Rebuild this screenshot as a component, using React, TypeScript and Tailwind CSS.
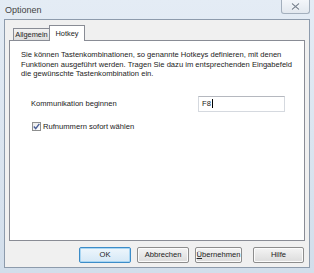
import React from 'react'

const font = { fontFamily: '"Liberation Sans", Arial, sans-serif' }

const Btn: React.FC<{ children: React.ReactNode; primary?: boolean; className?: string }> = ({
  children,
  primary,
  className,
}) => (
  <div
    className={
      'h-[16px] flex items-center justify-center rounded-[2px] border text-[7.6px] text-[#222] ' +
      (primary
        ? 'border-[#3c8cc8] bg-gradient-to-b from-[#eef6fc] to-[#d5e8f6] shadow-[inset_0_0_0_1px_#a9d6f3] '
        : 'border-[#8d8d8d] bg-gradient-to-b from-[#f4f4f4] to-[#dcdcdc] shadow-[inset_0_0_0_1px_#fbfbfb] ') +
      (className ?? '')
    }
  >
    {children}
  </div>
)

export default function App() {
  return (
    <div
      className="w-[314px] h-[273px] overflow-hidden flex flex-col px-[4px] pb-[5px] bg-gradient-to-b from-[#e4ecf5] to-[#d2deeb]"
      style={font}
    >
      {/* title bar */}
      <div className="h-[19px] flex justify-between">
        <span className="mt-[5px] pl-[1px] text-[9px] leading-[10px] text-[#444]">Optionen</span>
        <div className="w-[29px] h-[14px] flex items-center justify-center rounded-b-[3px] border border-t-0 border-[#a3afbd] bg-gradient-to-b from-[#f3f6fa] to-[#e2e8ef]">
          <svg width="9" height="7" viewBox="0 0 9 7">
            <path d="M1 0.5 L8 6.5 M8 0.5 L1 6.5" stroke="#fafbfc" strokeWidth="2.6" />
            <path d="M1 0.5 L8 6.5 M8 0.5 L1 6.5" stroke="#7d8794" strokeWidth="1.1" />
          </svg>
        </div>
      </div>

      {/* client area */}
      <div className="flex-1 flex flex-col bg-[#f0f0f0] border border-[#8d9bac] pl-[4px] pr-[4px] pt-[5px]">
        {/* tabs */}
        <div className="h-[15px] flex items-end pl-[4px] text-[7.4px] text-[#222]">
          <div className="h-[12px] w-[37px] flex items-center justify-center border border-b-0 border-[#898c95] bg-gradient-to-b from-[#f2f2f2] to-[#dedede]">
            Allgemein
          </div>
          <div className="relative z-10 -mb-px h-[16px] w-[36px] -ml-px flex items-start pt-[2px] justify-center border border-b-0 border-[#898c95] bg-white">
            Hotkey
          </div>
        </div>

        {/* panel */}
        <div className="h-[201px] bg-white border border-[#898c95] flex flex-col pl-[11px] pt-[9px] text-[7.6px] text-[#222]">
          <p className="leading-[9.5px] whitespace-nowrap">
            Sie können Tastenkombinationen, so genannte Hotkeys definieren, mit denen
            <br />
            Funktionen ausgeführt werden. Tragen Sie dazu im entsprechenden Eingabefeld
            <br />
            die gewünschte Tastenkombination ein.
          </p>

          <div className="mt-[17px] flex items-center justify-between pl-[10px] pr-[19px]">
            <span>Kommunikation beginnen</span>
            <div className="w-[87px] h-[16px] flex items-center pl-[3px] border border-[#d5d9df] border-t-[#b5b8bf] bg-white">
              <span>F8</span>
              <span className="w-px h-[9px] bg-black ml-px" />
            </div>
          </div>

          <div className="mt-[9px] flex items-center pl-[11px]">
            <div className="w-[9px] h-[9px] border border-[#8e8f8f] bg-gradient-to-br from-[#eaeaea] to-white flex items-center justify-center">
              <svg width="7" height="7" viewBox="0 0 7 7">
                <path d="M0.8 3.6 L2.7 5.6 L6.3 0.8" stroke="#4a5f97" strokeWidth="1.4" fill="none" />
              </svg>
            </div>
            <span className="ml-[2px]">Rufnummern sofort wählen</span>
          </div>
        </div>

        {/* buttons */}
        <div className="mt-[6px] flex justify-end pr-[1px]">
          <Btn primary className="w-[52px]">
            OK
          </Btn>
          <Btn className="w-[52px] ml-[6px]">Abbrechen</Btn>
          <Btn className="w-[47px] ml-[6px]">
            <span>
              <span className="underline underline-offset-[1px]">Ü</span>bernehmen
            </span>
          </Btn>
          <Btn className="w-[51px] ml-[11px]">Hilfe</Btn>
        </div>
      </div>
    </div>
  )
}
